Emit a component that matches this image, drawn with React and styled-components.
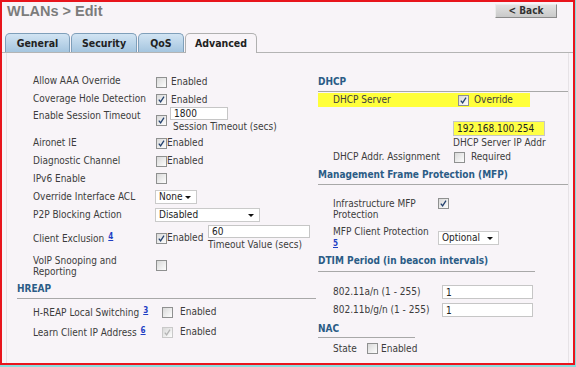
import React from "react";
import styled, { createGlobalStyle } from "styled-components";

const GlobalStyle = createGlobalStyle`
  html, body {
    margin: 0;
    padding: 0;
    background: #86dede;
  }
  body {
    font-family: "DejaVu Sans Condensed", "DejaVu Sans", sans-serif;
  }
`;

const Frame = styled.div`
  width: 575px;
  height: 365px;
  box-sizing: border-box;
  border: 2px solid #e8141c;
  background: #f8f4f8;
  display: flex;
  flex-direction: column;
  overflow: hidden;
  color: #3c3c3c;
  font-size: 10px;
`;

const Header = styled.div`
  height: 31px;
  display: flex;
  justify-content: space-between;
  align-items: flex-start;
  padding: 0 16px 0 5px;
`;

const Title = styled.h1`
  margin: 1px 0 0;
  font: bold 14.5px "Liberation Sans", Arial, sans-serif;
  color: #7c7c7c;
`;

const BackButton = styled.button`
  margin-top: 2px;
  width: 62px;
  height: 14px;
  padding: 0;
  border: 1px solid;
  border-color: #ececec #8a8a8a #8a8a8a #ececec;
  background: linear-gradient(#e2e2e2, #c9c9c9);
  font: bold 10px "DejaVu Sans Condensed", "DejaVu Sans", sans-serif;
  color: #333;
  line-height: 12px;
`;

const TabBar = styled.div`
  display: flex;
  align-items: flex-end;
  height: 19px;
  padding-left: 3px;
  border-bottom: 1px solid #b4b4b4;
`;

const Tab = styled.div`
  width: ${(p) => p.$w}px;
  height: ${(p) => (p.$active ? 20 : 19)}px;
  margin-bottom: ${(p) => (p.$active ? -1 : 0)}px;
  margin-right: 1px;
  box-sizing: border-box;
  border: 1px solid ${(p) => (p.$active ? "#b0b0b0" : "#7f9fba")};
  border-bottom: none;
  border-radius: 5px 5px 0 0;
  background: ${(p) =>
    p.$active ? "#f8f4f8" : "linear-gradient(#d2e4f3, #a5c5df)"};
  font-weight: bold;
  font-size: 10.5px;
  color: #222;
  text-align: center;
  line-height: 18px;
`;

const Panel = styled.div`
  flex: 1;
  display: flex;
  margin: 0 4px;
  border-left: 1px solid #e6e2e6;
  border-right: 1px solid #e6e2e6;
`;

const LeftCol = styled.div`
  width: 309px;
  box-sizing: border-box;
  padding: 19px 0 0 10px;
`;

const RightCol = styled.div`
  flex: 1;
  padding: 23px 0 0 2px;
`;

const Rows = styled.div`
  padding-left: ${(p) => p.$indent}px;
`;

const Section = styled.div`
  width: ${(p) => (p.$w ? `${p.$w}px` : "auto")};
  padding: ${(p) => p.$top || 0}px 0 ${(p) => p.$bottom || 3}px;
  border-bottom: 1px solid #a8a8a8;
  color: #2b5c86;
  font-weight: bold;
  line-height: 12px;
`;

const Row = styled.div`
  display: grid;
  grid-template-columns: ${(p) => p.$label}px auto;
  height: ${(p) => p.$h}px;
  margin-top: ${(p) => p.$mt || 0}px;
  align-items: ${(p) => p.$align || "center"};
  background: ${(p) => p.$mark || "transparent"};
  width: ${(p) => (p.$w ? `${p.$w}px` : "auto")};
  padding-left: ${(p) => p.$pl || 0}px;
  box-sizing: border-box;
`;

const Label = styled.div`
  line-height: ${(p) => p.$lh || 12}px;
  padding-top: ${(p) => p.$pt || 0}px;
`;

const Value = styled.div`
  display: flex;
  align-items: ${(p) => p.$align || "center"};
  margin-top: ${(p) => p.$shift || 0}px;
  margin-left: ${(p) => p.$ml || 0}px;
`;

const Box = styled.span`
  display: inline-block;
  flex: none;
  width: 11px;
  height: 11px;
  box-sizing: border-box;
  border: 1px solid ${(p) => (p.$disabled ? "#c9c9c9" : "#8f9090")};
  background: linear-gradient(135deg, #d9d9d9, #fdfdfd);
  svg {
    display: block;
  }
`;

const BoxText = styled.span`
  margin-left: ${(p) => p.$gap || 0}px;
  line-height: 12px;
  width: ${(p) => (p.$w ? `${p.$w}px` : "auto")};
`;

const TextInput = styled.input`
  width: ${(p) => p.$w}px;
  height: ${(p) => p.$h || 13}px;
  box-sizing: border-box;
  margin: 0;
  padding: 0 0 0 3px;
  border: 1px solid #c6c6c6;
  background: ${(p) => p.$bg || "#fff"};
  font: 10px "DejaVu Sans Condensed", "DejaVu Sans", sans-serif;
  color: #222;
  outline: none;
`;

const Stack = styled.div`
  display: flex;
  flex-direction: column;
  margin-left: ${(p) => p.$ml || 0}px;
`;

const SubText = styled.div`
  line-height: 14px;
  padding-left: ${(p) => p.$pl || 0}px;
  white-space: nowrap;
`;

const Select = styled.div`
  width: ${(p) => p.$w}px;
  height: 14px;
  box-sizing: border-box;
  display: flex;
  align-items: center;
  justify-content: space-between;
  padding: 0 5px 0 3px;
  border: 1px solid #cacaca;
  background: #fff;
  color: #222;
  line-height: 12px;
  &::after {
    content: "";
    border-left: 3px solid transparent;
    border-right: 3px solid transparent;
    border-top: 3px solid #111;
    margin-top: 1px;
  }
`;

const Ref = styled.a`
  margin-left: 4px;
  font-size: 8px;
  font-weight: bold;
  color: #1f3fc4;
  text-decoration: underline;
  vertical-align: 3px;
`;

const Check = ({ on, disabled }) => (
  <Box $disabled={disabled}>
    {on && (
      <svg width="9" height="9" viewBox="0 0 9 9">
        <path
          d="M1.8 4.6 L3.6 6.8 L7 1.6"
          fill="none"
          stroke={disabled ? "#b4b4b4" : "#23406e"}
          strokeWidth="1.3"
        />
      </svg>
    )}
  </Box>
);

const tabs = [
  { name: "General", w: 65 },
  { name: "Security", w: 66 },
  { name: "QoS", w: 46 },
  { name: "Advanced", w: 72, active: true },
];

export default function App() {
  return (
    <>
      <GlobalStyle />
      <Frame>
        <Header>
          <Title>WLANs &gt; Edit</Title>
          <BackButton>&lt; Back</BackButton>
        </Header>
        <TabBar>
          {tabs.map((t) => (
            <Tab key={t.name} $w={t.w} $active={t.active}>
              {t.name}
            </Tab>
          ))}
        </TabBar>
        <Panel>
          <LeftCol>
            <Rows $indent={16}>
              <Row $label={123} $h={18}>
                <Label>Allow AAA Override</Label>
                <Value $shift={2}>
                  <Check />
                  <BoxText $gap={4}>Enabled</BoxText>
                </Value>
              </Row>
              <Row $label={123} $h={17}>
                <Label>Coverage Hole Detection</Label>
                <Value $shift={2}>
                  <Check on />
                  <BoxText $gap={4}>Enabled</BoxText>
                </Value>
              </Row>
              <Row $label={123} $h={27} $align="stretch">
                <Label $pt={3}>Enable Session Timeout</Label>
                <Value>
                  <Check on />
                  <Stack $ml={3}>
                    <TextInput $w={58} defaultValue="1800" readOnly />
                    <SubText $pl={3}>Session Timeout (secs)</SubText>
                  </Stack>
                </Value>
              </Row>
              <Row $label={123} $h={18}>
                <Label>Aironet IE</Label>
                <Value>
                  <Check on />
                  <BoxText>Enabled</BoxText>
                </Value>
              </Row>
              <Row $label={123} $h={18}>
                <Label>Diagnostic Channel</Label>
                <Value>
                  <Check />
                  <BoxText>Enabled</BoxText>
                </Value>
              </Row>
              <Row $label={123} $h={17}>
                <Label>IPv6 Enable</Label>
                <Value>
                  <Check />
                </Value>
              </Row>
              <Row $label={122} $h={19}>
                <Label>Override Interface ACL</Label>
                <Value>
                  <Select $w={42}>None</Select>
                </Value>
              </Row>
              <Row $label={122} $h={18}>
                <Label>P2P Blocking Action</Label>
                <Value>
                  <Select $w={105}>Disabled</Select>
                </Value>
              </Row>
              <Row $label={123} $h={28}>
                <Label>
                  Client Exclusion<Ref href="#">4</Ref>
                </Label>
                <Value>
                  <Check on />
                  <BoxText $w={41}>Enabled</BoxText>
                  <Stack>
                    <TextInput $w={102} defaultValue="60" readOnly />
                    <SubText>Timeout Value (secs)</SubText>
                  </Stack>
                </Value>
              </Row>
              <Row $label={123} $h={27}>
                <Label $lh={11}>
                  VoIP Snooping and
                  <br />
                  Reporting
                </Label>
                <Value>
                  <Check />
                </Value>
              </Row>
            </Rows>
            <Section $top={4}>HREAP</Section>
            <Rows $indent={16}>
              <Row $label={129} $h={20} $mt={3}>
                <Label>
                  H-REAP Local Switching<Ref href="#">3</Ref>
                </Label>
                <Value>
                  <Check />
                  <BoxText $gap={7}>Enabled</BoxText>
                </Value>
              </Row>
              <Row $label={129} $h={20}>
                <Label>
                  Learn Client IP Address<Ref href="#">6</Ref>
                </Label>
                <Value>
                  <Check on disabled />
                  <BoxText $gap={7}>Enabled</BoxText>
                </Value>
              </Row>
            </Rows>
          </LeftCol>

          <RightCol>
            <Section>DHCP</Section>
            <Row
              $label={125}
              $h={14}
              $mt={1}
              $w={212}
              $pl={15}
              $mark="#ffff3a"
            >
              <Label>DHCP Server</Label>
              <Value>
                <Check on />
                <BoxText $gap={5}>Override</BoxText>
              </Value>
            </Row>
            <Rows $indent={15}>
              <Row $label={120} $h={41} $align="start">
                <span />
                <Stack>
                  <TextInput
                    $w={92}
                    $h={15}
                    $bg="#ffff45"
                    defaultValue="192.168.100.254"
                    readOnly
                    style={{ marginTop: 14 }}
                  />
                  <SubText>DHCP Server IP Addr</SubText>
                </Stack>
              </Row>
              <Row $label={120} $h={18}>
                <Label>DHCP Addr. Assignment</Label>
                <Value $ml={1}>
                  <Check />
                  <BoxText $gap={6}>Required</BoxText>
                </Value>
              </Row>
            </Rows>
            <Section $top={3}>Management Frame Protection (MFP)</Section>
            <Rows $indent={15}>
              <Row $label={105} $h={28} $mt={13} $align="start">
                <Label $lh={11}>
                  Infrastructure MFP
                  <br />
                  Protection
                </Label>
                <Value>
                  <Check on />
                </Value>
              </Row>
              <Row $label={105} $h={22}>
                <Label $lh={11}>
                  MFP Client Protection
                  <br />
                  <Ref href="#" style={{ marginLeft: 0, verticalAlign: 0 }}>
                    5
                  </Ref>
                </Label>
                <Value>
                  <Select $w={61}>Optional</Select>
                </Value>
              </Row>
            </Rows>
            <Section $w={217} $top={7} $bottom={4}>
              DTIM Period (in beacon intervals)
            </Section>
            <Rows $indent={15}>
              <Row $label={109} $h={18} $mt={11}>
                <Label>802.11a/n (1 - 255)</Label>
                <TextInput $w={91} $h={14} defaultValue="1" readOnly />
              </Row>
              <Row $label={109} $h={18}>
                <Label>802.11b/g/n (1 - 255)</Label>
                <TextInput $w={91} $h={14} defaultValue="1" readOnly />
              </Row>
            </Rows>
            <Section $w={97} $top={4} $bottom={2}>
              NAC
            </Section>
            <Rows $indent={15}>
              <Row $label={34} $h={19} $mt={1}>
                <Label>State</Label>
                <Value>
                  <Check />
                  <BoxText $gap={3}>Enabled</BoxText>
                </Value>
              </Row>
            </Rows>
          </RightCol>
        </Panel>
      </Frame>
    </>
  );
}
